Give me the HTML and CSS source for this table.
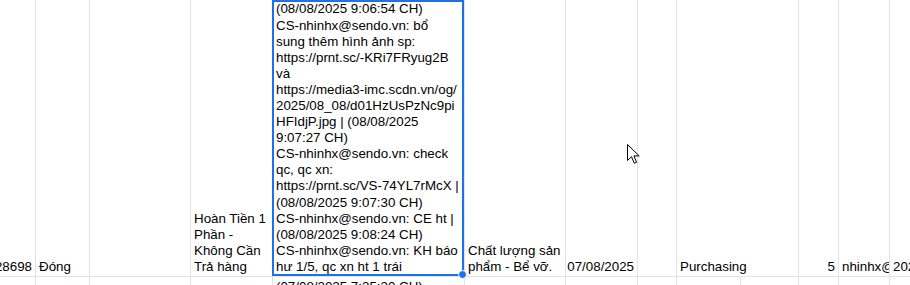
FILE: index.html
```html
<!DOCTYPE html>
<html lang="vi">
<head>
<meta charset="utf-8">
<title>Sheet</title>
<link rel="stylesheet" href="styles.css">
</head>
<body>
<div class="sheet">
  <div class="cell right"><div class="txt">1528698</div></div>
  <div class="cell"><div class="txt">Đóng</div></div>
  <div class="cell"></div>
  <div class="cell"><div class="txt">Hoàn Tiền 1<br>Phần -<br>Không Cần<br>Trả hàng</div></div>
  <div class="cell notes"><div class="txt">(08/08/2025 9:06:54 CH)<br>CS-nhinhx@sendo.vn: bổ<br>sung thêm hình ảnh sp:<br>https://prnt.sc/-KRi7FRyug2B<br>và<br>https://media3-imc.scdn.vn/og/<br>2025/08_08/d01HzUsPzNc9pi<br>HFIdjP.jpg | (08/08/2025<br>9:07:27 CH)<br>CS-nhinhx@sendo.vn: check<br>qc, qc xn:<br>https://prnt.sc/VS-74YL7rMcX |<br>(08/08/2025 9:07:30 CH)<br>CS-nhinhx@sendo.vn: CE ht |<br>(08/08/2025 9:08:24 CH)<br>CS-nhinhx@sendo.vn: KH báo<br>hư 1/5, qc xn ht 1 trái</div></div>
  <div class="cell"><div class="txt">Chất lượng sản<br>phẩm - Bể vỡ.</div></div>
  <div class="cell right"><div class="txt">07/08/2025</div></div>
  <div class="cell"></div>
  <div class="cell span2"><div class="txt">Purchasing</div></div>
  <div class="cell right"><div class="txt">5</div></div>
  <div class="cell"><div class="txt">nhinhx@sendo.vn</div></div>
  <div class="cell"><div class="txt">2025-08-08</div></div>

  <div class="cell"></div>
  <div class="cell"></div>
  <div class="cell"></div>
  <div class="cell"></div>
  <div class="cell top notes"><div class="txt">(07/08/2025 7:35:30 CH)</div></div>
  <div class="cell"></div>
  <div class="cell"></div>
  <div class="cell"></div>
  <div class="cell"></div>
  <div class="cell"></div>
  <div class="cell"></div>
  <div class="cell"></div>
  <div class="cell"></div>

  <div class="selection"><span class="handle"></span></div>
</div>
<svg class="cursor" width="14" height="21" viewBox="0 0 14 21" aria-hidden="true">
  <path d="M0.5 0.5 V16.5 L4.5 12.7 L7.3 19.3 L9.6 18.3 L6.9 11.9 H12.2 Z" fill="#fff" stroke="#000" stroke-width="1" stroke-linejoin="miter"/>
</svg>
</body>
</html>
```

FILE: styles.css
```css
html, body {
  margin: 0;
  padding: 0;
  background: #fff;
  overflow: hidden;
}

body {
  width: 910px;
  height: 285px;
  position: relative;
  font-family: "Liberation Sans", Arial, sans-serif;
  font-size: 13.333px;
  line-height: 16.1px;
  color: #000;
}

.sheet {
  position: relative;
  display: grid;
  grid-template-columns: 36px 54px 101px 82px 192px 101px 72px 39px 64px 58px 40px 51px 100px;
  grid-template-rows: 277px 40px;
}

.cell {
  box-sizing: border-box;
  border-right: 1px solid #e2e3e3;
  border-bottom: 1px solid #e2e3e3;
  padding: 0 3px 1px 3px;
  overflow: hidden;
  display: flex;
  flex-direction: column;
  justify-content: flex-end;
  align-items: flex-start;
  min-width: 0;
}

.cell.right {
  align-items: flex-end;
}

.cell.span2 {
  grid-column: span 2;
}

.cell.top {
  justify-content: flex-start;
  padding-top: 2px;
}

.txt {
  white-space: nowrap;
  flex: none;
}

.selection {
  position: absolute;
  grid-column: 5;
  grid-row: 1;
  left: -1px;
  top: 0;
  width: 192px;
  height: 276px;
  box-sizing: border-box;
  border: 2px solid #1a73e8;
  pointer-events: none;
}

.handle {
  position: absolute;
  right: -5px;
  bottom: -5px;
  width: 7px;
  height: 7px;
  border-radius: 50%;
  background: #1a73e8;
  border: 1px solid #fff;
}

.cursor {
  position: absolute;
  left: 627px;
  top: 144px;
}
```
